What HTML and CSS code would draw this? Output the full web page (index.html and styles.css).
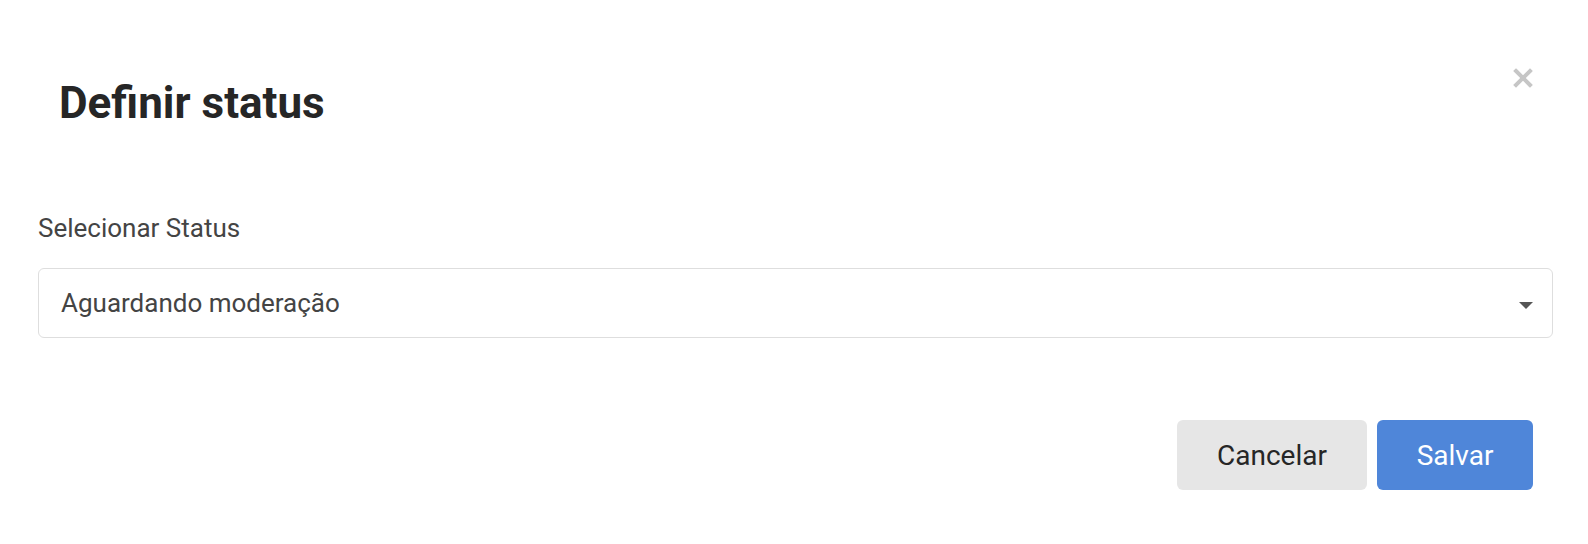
FILE: index.html
```html
<!DOCTYPE html>
<html lang="pt-BR">
<head>
    <meta charset="UTF-8">
    <meta name="viewport" content="width=device-width, initial-scale=1.0">
    <title>Definir status</title>
    <link rel="stylesheet" href="styles.css">
</head>
<body>
    <div class="modal">
        <div class="modal-header">
            <h1 class="modal-title">Definir status</h1>
            <button class="close" type="button" aria-label="Fechar">
                <svg width="20" height="20" viewBox="0 0 20 20">
                    <path d="M3 3 L17 17 M17 3 L3 17" stroke="#c6c6c6" stroke-width="4" stroke-linecap="square"/>
                </svg>
            </button>
        </div>

        <form class="modal-body">
            <label for="status" class="field-label">Selecionar Status</label>
            <div class="select">
                <select id="status">
                    <option>Aguardando moderação</option>
                    <option>Aprovado</option>
                    <option>Reprovado</option>
                </select>
                <span class="caret"></span>
            </div>

            <div class="modal-footer">
                <button type="button" class="btn btn-cancel">Cancelar</button>
                <button type="submit" class="btn btn-save">Salvar</button>
            </div>
        </form>
    </div>
</body>
</html>
```

FILE: styles.css
```css
body {
    font-family: 'Roboto', 'Liberation Sans', sans-serif;
    background: #ffffff;
    color: #444444;
    margin: 0;
}
.modal {
    padding: 0 35px 0 38px;
}
.modal-header {
    display: flex;
    justify-content: space-between;
    align-items: flex-start;
    padding: 81px 20px 0 21px;
}
.modal-title {
    margin: 0;
    font-size: 44px;
    line-height: 1;
    font-weight: 700;
    color: #262626;
}
.close {
    background: none;
    border: none;
    padding: 0;
    margin-top: -13px;
    width: 20px;
    height: 20px;
    cursor: pointer;
}
.close svg {
    display: block;
}
.modal-body {
    margin-top: 88px;
}
.field-label {
    display: block;
    font-size: 26px;
    line-height: 30px;
    color: #444444;
}
.select {
    position: relative;
    margin-top: 25px;
}
.select select {
    width: 100%;
    height: 70px;
    padding: 0 22px;
    border: 1px solid #dedede;
    border-radius: 6px;
    background: #ffffff;
    font-family: inherit;
    font-size: 26px;
    color: #444444;
    appearance: none;
    -webkit-appearance: none;
    outline: none;
}
.caret {
    position: absolute;
    right: 20px;
    top: 34px;
    width: 0;
    height: 0;
    border-left: 7px solid transparent;
    border-right: 7px solid transparent;
    border-top: 7px solid #555555;
}
.modal-footer {
    display: flex;
    justify-content: flex-end;
    gap: 10px;
    margin-top: 82px;
    padding-right: 20px;
}
.btn {
    height: 70px;
    border: none;
    border-radius: 6px;
    font-family: inherit;
    font-size: 28px;
    cursor: pointer;
}
.btn-cancel {
    width: 190px;
    background: #e6e6e6;
    color: #262626;
}
.btn-save {
    width: 156px;
    background: #4f86d9;
    color: #ffffff;
}
```
